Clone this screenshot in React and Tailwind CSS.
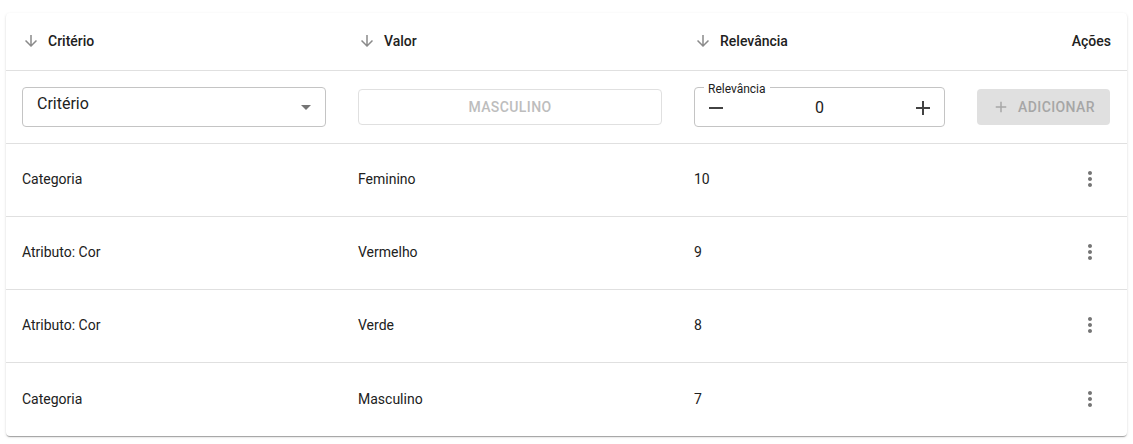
import React from 'react';

const rows = [
  { criterio: 'Categoria', valor: 'Feminino', relevancia: 10 },
  { criterio: 'Atributo: Cor', valor: 'Vermelho', relevancia: 9 },
  { criterio: 'Atributo: Cor', valor: 'Verde', relevancia: 8 },
  { criterio: 'Categoria', valor: 'Masculino', relevancia: 7 },
];

const cols = 'grid grid-cols-[336px_336px_283px_1fr]';

function ArrowDown() {
  return (
    <svg viewBox="0 0 24 24" className="w-[18px] h-[18px] fill-[#8a8a8a] mr-2">
      <path d="M20 12l-1.41-1.41L13 16.17V4h-2v12.17l-5.58-5.59L4 12l8 8 8-8z" />
    </svg>
  );
}

function MoreVert() {
  return (
    <svg viewBox="0 0 24 24" className="w-6 h-6 fill-[#757575]">
      <path d="M12 8c1.1 0 2-.9 2-2s-.9-2-2-2-2 .9-2 2 .9 2 2 2zm0 2c-1.1 0-2 .9-2 2s.9 2 2 2 2-.9 2-2-.9-2-2-2zm0 6c-1.1 0-2 .9-2 2s.9 2 2 2 2-.9 2-2-.9-2-2-2z" />
    </svg>
  );
}

function HeaderCell({ label, sort = true, right = false }) {
  return (
    <div className={`flex items-center px-4 pb-[2px] text-sm font-medium text-[#212121] ${right ? 'justify-end' : ''}`}>
      {sort && <ArrowDown />}
      <span>{label}</span>
    </div>
  );
}

export default function App() {
  return (
    <div className="bg-white pt-[13px] px-[6px] pb-2 font-['Roboto',sans-serif]">
      <div className="bg-white rounded shadow-[0_2px_1px_-1px_rgba(0,0,0,0.2),0_1px_1px_0_rgba(0,0,0,0.14),0_1px_3px_0_rgba(0,0,0,0.12)]">
        {/* Cabeçalho */}
        <div className={`${cols} h-[58px] border-b border-[#e0e0e0]`}>
          <HeaderCell label="Critério" />
          <HeaderCell label="Valor" />
          <HeaderCell label="Relevância" />
          <HeaderCell label="Ações" sort={false} right />
        </div>

        {/* Linha de inclusão */}
        <div className={`${cols} h-[73px] border-b border-[#e0e0e0] items-center`}>
          <div className="px-4">
            <div className="h-10 border border-[#c4c4c4] rounded flex items-center justify-between pl-[14px] pr-[7px]">
              <span className="text-base text-[#212121] -mt-[7px]">Critério</span>
              <svg viewBox="0 0 24 24" className="w-6 h-6 fill-[#757575]">
                <path d="M7 10l5 5 5-5z" />
              </svg>
            </div>
          </div>
          <div className="px-4">
            <div className="h-9 border border-[#e0e0e0] rounded flex items-center justify-center text-sm font-medium tracking-[0.4px] text-[#bdbdbd]">
              MASCULINO
            </div>
          </div>
          <div className="px-4">
            <div className="relative h-10 border border-[#c4c4c4] rounded flex items-center justify-between px-[9px]">
              <span className="absolute -top-[7px] left-[9px] bg-white px-[4px] text-xs text-[#212121] leading-4">Relevância</span>
              <svg viewBox="0 0 24 24" className="w-6 h-6 fill-[#424242] mt-[2px]">
                <path d="M19 13H5v-2h14v2z" />
              </svg>
              <span className="text-base text-[#212121] mt-[2px]">0</span>
              <svg viewBox="0 0 24 24" className="w-6 h-6 fill-[#424242] mt-[2px]">
                <path d="M19 13h-6v6h-2v-6H5v-2h6V5h2v6h6v2z" />
              </svg>
            </div>
          </div>
          <div className="px-4">
            <div className="h-9 bg-[#e0e0e0] rounded flex items-center justify-center gap-2 text-sm font-medium tracking-[0.4px] text-[#a6a6a6] mr-[1px]">
              <svg viewBox="0 0 24 24" className="w-[18px] h-[18px] fill-[#a6a6a6]">
                <path d="M19 13h-6v6h-2v-6H5v-2h6V5h2v6h6v2z" />
              </svg>
              ADICIONAR
            </div>
          </div>
        </div>

        {/* Linhas */}
        {rows.map((r, i) => (
          <div
            key={i}
            className={`${cols} h-[73px] pb-[2px] items-center text-sm text-[#212121] ${i < rows.length - 1 ? 'border-b border-[#e0e0e0]' : ''}`}
          >
            <div className="px-4">{r.criterio}</div>
            <div className="px-4">{r.valor}</div>
            <div className="px-4">{r.relevancia}</div>
            <div className="px-4 flex justify-end">
              <div className="p-2 mr-[1px]">
                <MoreVert />
              </div>
            </div>
          </div>
        ))}
      </div>
    </div>
  );
}
